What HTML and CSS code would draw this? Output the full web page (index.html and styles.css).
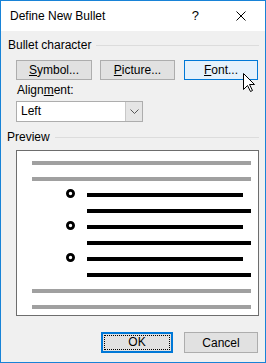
FILE: index.html
```html
<!DOCTYPE html>
<html lang="en">
<head>
    <meta charset="UTF-8">
    <title>Define New Bullet</title>
    <link rel="stylesheet" href="styles.css">
</head>
<body>
    <div class="dialog">
        <div class="titlebar">
            <span class="title">Define New Bullet</span>
            <span class="help">?</span>
            <svg class="close" width="10" height="10" viewBox="0 0 10 10">
                <path d="M0.5 0.5 L9.5 9.5 M9.5 0.5 L0.5 9.5" stroke="#000" stroke-width="1" fill="none"/>
            </svg>
        </div>
        <div class="content">
            <div class="group-head"><span>Bullet character</span><i></i></div>
            <div class="btn-row">
                <button class="btn btn-symbol"><u>S</u>ymbol...</button>
                <button class="btn btn-picture"><u>P</u>icture...</button>
                <button class="btn btn-font hover"><u>F</u>ont...</button>
            </div>
            <div class="label">Align<u>m</u>ent:</div>
            <div class="select">
                <span class="select-value">Left</span>
                <span class="select-arrow">
                    <svg width="9" height="5" viewBox="0 0 9 5"><path d="M0.5 0.5 L4.5 4.5 L8.5 0.5" stroke="#555" fill="none"/></svg>
                </span>
            </div>
            <div class="group-head preview-head"><span>Preview</span><i></i></div>
            <div class="preview">
                <div class="pv-row"><div class="pv-gray"></div></div>
                <div class="pv-row"><div class="pv-gray"></div></div>
                <div class="pv-row"><svg class="pv-bullet" width="9" height="9" viewBox="0 0 9 9"><circle cx="4.5" cy="4.5" r="3.1" stroke="#000" stroke-width="2.8" fill="#fff"/></svg><div class="pv-black short"></div></div>
                <div class="pv-row indent"><div class="pv-black"></div></div>
                <div class="pv-row"><svg class="pv-bullet" width="9" height="9" viewBox="0 0 9 9"><circle cx="4.5" cy="4.5" r="3.1" stroke="#000" stroke-width="2.8" fill="#fff"/></svg><div class="pv-black short"></div></div>
                <div class="pv-row indent"><div class="pv-black"></div></div>
                <div class="pv-row"><svg class="pv-bullet" width="9" height="9" viewBox="0 0 9 9"><circle cx="4.5" cy="4.5" r="3.1" stroke="#000" stroke-width="2.8" fill="#fff"/></svg><div class="pv-black short"></div></div>
                <div class="pv-row indent"><div class="pv-black"></div></div>
                <div class="pv-row"><div class="pv-gray"></div></div>
                <div class="pv-row"><div class="pv-gray"></div></div>
            </div>
            <div class="footer">
                <button class="btn btn-ok"><span class="focus">OK</span></button>
                <button class="btn btn-cancel">Cancel</button>
            </div>
        </div>
        <svg class="cursor" width="13" height="20" viewBox="0 0 13 20">
            <path d="M0.5 0.5 L0.5 16.5 L4.5 12.5 L7.5 18.5 L9.5 17.5 L6.5 11.5 L11.5 11.5 Z" fill="#fff" stroke="#000" stroke-width="1"/>
        </svg>
    </div>
</body>
</html>
```

FILE: styles.css
```css
body {
    margin: 0;
    padding: 0;
    font-family: "Liberation Sans", Arial, sans-serif;
    font-size: 12px;
    color: #000;
}

.dialog {
    position: relative;
    width: 266px;
    height: 363px;
    box-sizing: border-box;
    border: 1px solid #1883d7;
    background-color: #f0f0f0;
    display: flex;
    flex-direction: column;
}

.titlebar {
    height: 30px;
    background-color: #fff;
    display: flex;
    align-items: center;
    padding-left: 9px;
    padding-bottom: 1px;
    box-sizing: border-box;
}

.title {
    flex: 1;
}

.help {
    font-size: 13px;
    margin-right: 37px;
}

.close {
    margin-right: 19px;
}

.content {
    flex: 1;
    padding-left: 7px;
    padding-right: 6px;
}

.group-head {
    display: flex;
    align-items: center;
    height: 16px;
    margin-top: 6px;
    line-height: 16px;
}

.group-head i {
    flex: 1;
    height: 1px;
    background-color: #dcdcdc;
    margin-left: 5px;
}

.btn-row {
    display: flex;
    margin-top: 7px;
    margin-left: 8px;
}

.btn {
    height: 20px;
    box-sizing: border-box;
    border: 1px solid #adadad;
    background-color: #e1e1e1;
    font-family: inherit;
    font-size: 12px;
    color: #000;
    padding: 0;
    line-height: 16px;
}

.btn-symbol {
    width: 76px;
}

.btn-picture {
    width: 75px;
    margin-left: 8px;
}

.btn-font {
    width: 74px;
    margin-left: 9px;
}

.btn.hover {
    background-color: #e5f1fb;
    border-color: #0078d7;
}

.label {
    margin-top: 2px;
    margin-left: 9px;
    line-height: 16px;
}

.select {
    margin-top: 3px;
    margin-left: 8px;
    width: 127px;
    height: 21px;
    box-sizing: border-box;
    border: 1px solid #adadad;
    background-color: #fff;
    display: flex;
}

.select-value {
    flex: 1;
    padding-left: 4px;
    line-height: 19px;
}

.select-arrow {
    width: 16px;
    background-color: #e5e5e5;
    border-left: 1px solid #c8c8c8;
    display: flex;
    align-items: center;
    justify-content: center;
}

.preview-head {
    margin-top: 7px;
}

.preview-head span {
    margin-left: -1px;
}

.preview {
    margin-top: 5px;
    margin-left: 8px;
    width: 243px;
    height: 166px;
    box-sizing: border-box;
    border: 1px solid #6d6d6d;
    background-color: #fff;
    padding-top: 10px;
    display: flex;
    flex-direction: column;
    gap: 12px;
}

.pv-row {
    height: 4px;
    display: flex;
    padding-left: 15px;
}

.pv-row.indent {
    padding-left: 70px;
}

.pv-gray {
    width: 219px;
    height: 4px;
    background-color: #a0a0a0;
}

.pv-black {
    width: 164px;
    height: 4px;
    background-color: #000;
}

.pv-black.short {
    width: 156px;
}

.pv-bullet {
    flex: none;
    margin-top: -4px;
    margin-left: 34px;
    margin-right: 12px;
}

.footer {
    display: flex;
    margin-top: 16px;
    margin-left: 93px;
}

.footer .btn {
    height: 21px;
}

.btn-ok {
    width: 72px;
    border: 2px solid #0078d7;
    padding: 1px;
}

.btn-ok .focus {
    display: block;
    height: 100%;
    box-sizing: border-box;
    border: 1px dotted #000;
    line-height: 13px;
}

.btn-cancel {
    width: 74px;
    margin-left: 11px;
}

.cursor {
    position: absolute;
    left: 242px;
    top: 72px;
}
```
